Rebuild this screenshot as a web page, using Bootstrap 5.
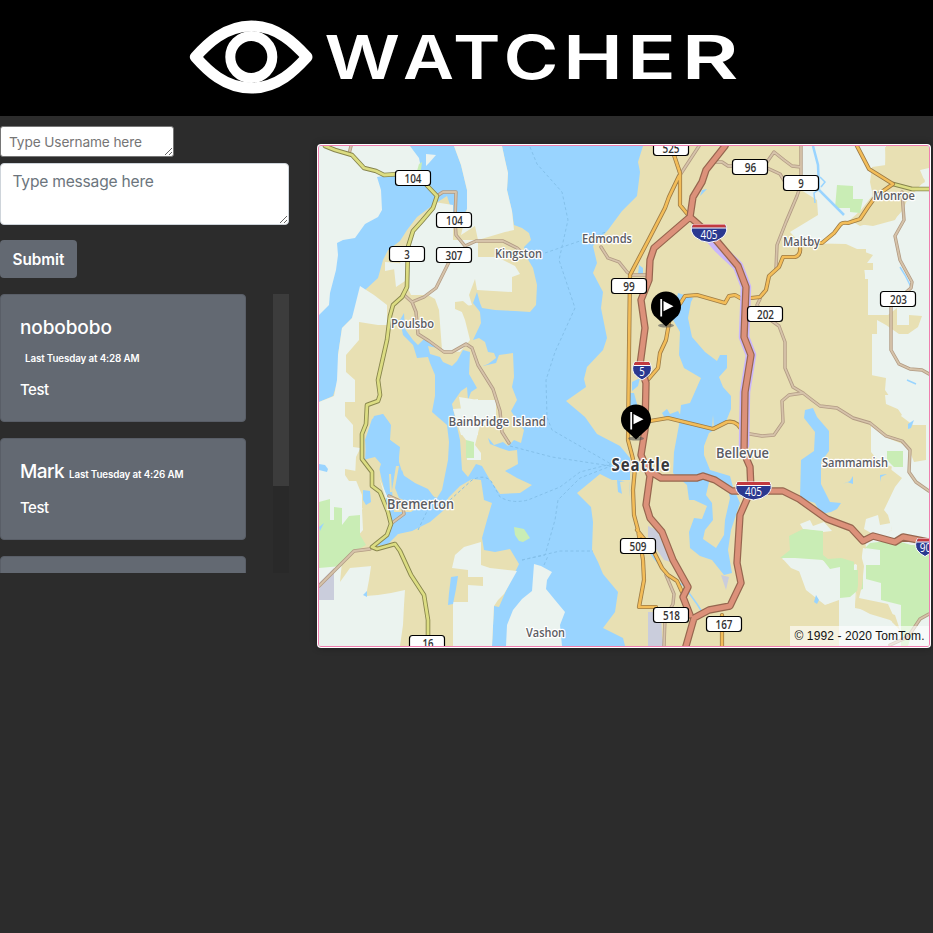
<!DOCTYPE html>
<html lang="en">
<head>
<meta charset="utf-8">
<meta name="viewport" content="width=device-width, initial-scale=1">
<title>Watcher</title>
<link href="https://cdn.jsdelivr.net/npm/bootstrap@5.3.0/dist/css/bootstrap.min.css" rel="stylesheet">
<style>
body{background:#2c2c2c;font-family:"Inter","Liberation Sans",sans-serif;min-height:933px;overflow:hidden}
.site-head{height:116px;background:#000}
.site-head svg{display:block;width:100%;height:116px}
.side{width:289px;padding-top:10px}
.user-box{display:block;width:174px;height:31px;padding:4px 8px;font-size:13.7px;line-height:22px;letter-spacing:-.13px;border:1px solid #767676;border-radius:3px;background:#fff;overflow:hidden;resize:vertical}
.user-box::placeholder{color:#757575}
.msg-box{height:62px;min-height:0;margin-top:6px;padding:6px 11.500px;font-size:15.6px;line-height:24px;letter-spacing:-.22px;border:1px solid #ced4da;border-radius:4px;background:#fff;overflow:hidden;resize:vertical}
.msg-box::placeholder{color:#6c757d}
.send{width:77px;height:38px;margin-top:15px;padding:2px 0 0;background:#636972;border:0;border-radius:4px;color:#fff;font-size:15.3px;font-weight:600}
.feed{height:279px;margin-top:16px;overflow:hidden}
.feed-list{width:246px}
.post{background:#636972;border:1px solid #595e67;border-radius:4px;color:#fff;margin-bottom:16px;padding:20px 19px;height:102px;overflow:hidden}
.post-tall{height:128px}
.who{font-size:19px;font-weight:500;line-height:26px;display:inline-block;letter-spacing:-.1px}
.post:not(.post-tall) .who{letter-spacing:-.6px}
.when{font-size:9.8px;font-weight:600;line-height:14px;margin-left:5px;letter-spacing:-.13px;display:inline-block}
.post-tall .when{display:block;margin-top:11px}
.what{font-size:15px;font-weight:500;line-height:20px;margin-top:14px;letter-spacing:-.5px}
.post:not(.post-tall) .what{margin-top:13px}
.track{width:16px;background:#292929}
.thumb{height:192px;background:#3c3c3c}
.map-frame{width:614px;height:504px;margin:28px 0 0 28px;background:#fff;border-radius:4px;padding:1px;box-shadow:0 0 7px rgba(0,0,0,.3)}
.map-frame svg{display:block;border:1px solid #f07fb0;border-radius:3px;width:612px;height:502px}
.ur{fill:#e8e0b3}.ru{fill:#ebf3ef}.wa{fill:#99d4ff}.gr{fill:#c9edb5}.gy{fill:#cacddc}
.rd{fill:none;stroke-linejoin:round;stroke-linecap:round}
.a1{stroke:#96664f;stroke-width:7.4}.a2{stroke:#dc917a;stroke-width:5}
.b1{stroke:#9c7b45;stroke-width:4.2}.b2{stroke:#f3bd59;stroke-width:2.6}
.c1{stroke:#87854d;stroke-width:4.6}.c2{stroke:#dcdd82;stroke-width:2.8}
.d1{stroke:#b29b84;stroke-width:3.4}.d2{stroke:#d6c3aa;stroke-width:1.8}
.halo{stroke:#c9b6fb;stroke-width:10.5}
.ferry{fill:none;stroke:#84c0ea;stroke-width:1;stroke-dasharray:3 2.5}
.town text{font-family:"Open Sans","Noto Sans",sans-serif;font-size:13px;font-weight:600;fill:#5c5c62;stroke:#fff;stroke-width:2.6px;stroke-linejoin:round;paint-order:stroke}
.town .mid{font-size:14.5px}
.town .big{font-size:17px;font-weight:700;fill:#38383c;letter-spacing:1px}
.sign rect{fill:#fff;stroke:#000;stroke-width:1.2}
.sign text,.inter text{font-family:"Open Sans","Noto Sans",sans-serif;font-size:12px;font-weight:600;fill:#333}
.inter text{fill:#fff;font-weight:400}
.logo-text text{font-family:"Inter","Liberation Sans",sans-serif;font-weight:600;font-size:60px;fill:#fff}
</style>
</head>
<body>
<header class="site-head">
<svg viewBox="0 0 933 116" role="img" aria-label="Watcher">
<g fill="none" stroke="#fff">
<path d="M195.500 57C207 44 225 26 251.300 26S295 44 307 57C295 70 278 88 251.300 88S207 70 195.500 57Z" stroke-width="11" stroke-linejoin="round"/>
<circle cx="251.300" cy="57" r="21" stroke-width="10"/>
</g>
<g class="logo-text">
<text x="324.500" y="78.600" textLength="75.500" lengthAdjust="spacingAndGlyphs">W</text>
<text x="403" y="78.600" textLength="51" lengthAdjust="spacingAndGlyphs">A</text>
<text x="453" y="78.600" textLength="47.500" lengthAdjust="spacingAndGlyphs">T</text>
<text x="503.500" y="78.600" textLength="55" lengthAdjust="spacingAndGlyphs">C</text>
<text x="563" y="78.600" textLength="60" lengthAdjust="spacingAndGlyphs">H</text>
<text x="627" y="78.600" textLength="49" lengthAdjust="spacingAndGlyphs">E</text>
<text x="681.500" y="78.600" textLength="57" lengthAdjust="spacingAndGlyphs">R</text>
</g>
</svg>
</header>
<main class="d-flex align-items-start">
<section class="side flex-shrink-0">
<textarea class="user-box" rows="1" placeholder="Type Username here"></textarea>
<textarea class="form-control msg-box" placeholder="Type message here"></textarea>
<button class="btn send d-block" type="button">Submit</button>
<div class="feed d-flex justify-content-between">
<div class="feed-list">
<article class="post post-tall"><div class="who">nobobobo</div><div class="when">Last Tuesday at 4:28 AM</div><div class="what">Test</div></article>
<article class="post"><div class="who">Mark</div><div class="when">Last Tuesday at 4:26 AM</div><div class="what">Test</div></article>
<article class="post"></article>
</div>
<div class="track"><div class="thumb"></div></div>
</div>
</section>
<section class="map-frame flex-shrink-0">
<svg viewBox="319 146 610 500">
<defs>
<path id="minor" d="M351 146L349 154M437 196L443 192H456L455 220L456 235L465 246L476 241H503L517 248L526 256M449 262L436 288L424 297L412 302L403 294L401 298M412 302L416 312L418 334L429 341L444 352L452 352L466 344L472 348L478 365L493 389L500 411L502 432L509 443M319 586L354 551L370 549M392 523L404 514L402 502L389 496M699 146L680 175M601 247L608 258L619 262L627 272L631 275H649M714 162H722L728 166H733M767 162L774 152L784 160L792 166L801 167M767 168L780 174L785 182M801 146V184L797 196L786 222L777 245L776 269M760 299L757 305L765 316L779 326L785 342V368L793 387L803 393L812 400L820 406L837 408L853 418L870 423L886 436L902 441L910 450L909 472L916 482L929 491M803 393L789 395L782 401L783 422L774 435L762 436L744 433M902 192L904 220L895 236L900 260L912 282L911 288L904 294M891 306V350L899 364L910 369L922 370L929 374M929 614L920 619L908 637L890 645M666 575L674 594L673 604L665 618L664 646"/>
<g id="wide"><path d="M-16.500-8.500Q-20-2-14 4Q-8 9 0 9.500Q8 9 14 4Q20-2 16.500-8.500Z" fill="#2b3990" stroke="#fff"/><path d="M-16-8.500H16L17-5.200H-17Z" fill="#c23a3f"/><path d="M-17-5H17" stroke="#fff"/></g>
<g id="slim"><path d="M-7.500-8.500Q-11-2-8 3Q-5 7 0 9.500Q5 7 8 3Q11-2 7.500-8.500Z" fill="#2b3990" stroke="#fff"/><path d="M-7-8.500H7L8.300-5.200H-8.300Z" fill="#c23a3f"/><path d="M-8.500-5H8.500" stroke="#fff"/></g>
<g id="pin"><ellipse cx="0" cy="18" rx="8" ry="2" fill="#555" opacity=".6"/><path d="M0 19L-12 8A15 15 0 1 1 12 8Z"/><path d="M-4.800-8.500V9" stroke="#fff" stroke-width="1.800"/><path d="M-2.500-6.500L7.500-1.200L-2.500 3.800Z" fill="#fff"/></g>
</defs>
<rect class="wa" x="319" y="146" width="610" height="500"/>
<!-- Olympic shore -->
<path class="ru" d="M319 146H410L419 158L421 168L418 172L395 174L377 177L381 190L382 210L378 217L365 224L355 238L343 240L337 243L338 255L336 270L330 293L329 305L319 315Z"/>
<path class="ru" d="M426 154L436 155L429 163L426 166Z"/>
<path class="gr" d="M419 164l3-2l-1 8l-4 1z"/>
<!-- Kitsap peninsula -->
<path class="ur" d="M454 146H502L505 160L508 173L507 190L512 211L514 225L522 228L529 233L531 240L524 247L526 256L533 268L537 285L536 305L530 312L515 311L495 310L482 308L480 303L477 292L473 303L480 312L481 323L473 340L479 338L485 342L488 352L494 353L496 358L488 364L483 366L496 363L499 355L513 353L514 377L512 387L517 400L511 411L518 422L524 430L521 443L514 440L508 446L503 442L494 445L490 440L488 438L490 444L500 448L509 451L517 450L518 464L505 471L517 478L532 485L520 493L500 494L490 480L482 466L476 464L468 477L462 470L460 440L452 404L461 391L467 387L468 400L471 392L477 388L469 374L470 352L463 350L457 361L452 366L443 362L440 357L430 354L428 346L437 348L425 338L418 345L413 340L405 329L404 313L400 320L403 335L413 345L417 358L428 357L430 363L435 375L435 396L432 412L447 425L449 442L448 460L442 490L437 498L430 495L423 488L405 479L402 470L398 477L404 490L396 487L400 447L390 440L390 424L383 414L372 419L365 440L367 460L380 465L382 477L386 500L392 530L375 545L390 541L396 534L413 530L428 522L437 515L449 497L460 486L472 479L481 480L484 500L492 503L487 520L482 538L484 550L495 552L510 549L519 564L505 593L499 607L494 606L492 646H319V402L333 396L338 380L338 355L342 328L352 318L357 305L365 290L378 278L383 260L388 250L400 241L407 230L417 217L433 205L447 196L453 214L457 228L461 220L467 209L467 190L461 165Z"/>
<path class="ru" d="M454 146H502L505 160L508 173L507 190L512 211L514 230L505 232L478 240L475 226L461 235L467 209L467 190L461 165ZM434 202L453 205V240L478 240V257H497L515 266L520 274L512 277V292L477 290L475 279L469 295L472 305L460 307L465 320L470 340L460 352L442 350L439 310L435 299L428 295H411L405 281L396 287L394 268L410 254V235L422 222ZM385 262L399 263L400 268L385 271ZM360 286L374 295L387 305V325L378 325L359 322V340L346 355V372L355 380L355 402L345 402V416L353 425V447L360 448V478L378 475L388 498L365 500L362 510L363 530L350 545H362L372 560L369 580L366 596L378 595L391 593L405 590L404 605L403 625L400 646H319V402L334 396L337 380L338 355L342 328L352 318Z"/>
<path class="ru" d="M459 397L478 400H496V425L480 425L475 445L481 453V460H467L466 440L460 432L462 415ZM453 409L466 408L462 401L478 399V435H461ZM464 547L481 542V565L490 568L517 571L504 594L498 600L494 606L492 646H453V602H468V585L483 586V577H468V570L452 568L455 555Z"/>
<path class="ur" d="M345 469L356 471L357 481L349 481L345 475ZM356 457L360 449L370 460L364 475L378 467L380 480L386 500L375 514L362 508L362 495L355 478ZM400 380L408 390L407 410L400 402ZM455 302l8-1l7 6l-8 5l-7-3zM355 548L390 540L372 566L350 568L340 582L342 562Z"/>
<path class="gr" d="M319 502L330 499V520H334V507L342 508V525L349 516L360 515V535L366 545L352 553L345 559L342 566L319 568ZM466 440L474 442V458H466Z"/>
<path class="gy" d="M319 583L334 568V600H319Z"/>
<path class="wa" d="M319 464l6 1l3 4l-1 3l-8-2zM363 490l7 1l1 11l-5 3l-3-5zM451 577l7-1l-2 13l-3 15l-5 1l1-12zM363 595l4-4l0 6zM319 527l5-4l-4 8z"/>
<path class="wa" d="M374 416L383 414L391 425L390 440L399 448V462L403 475L415 483L428 489L437 501L448 497L444 510L430 522L412 531L398 534L388 544L377 546L394 526L396 510L386 493L382 481L378 463L365 462L366 440Z"/>
<path class="ur" d="M389 474l2 0l1 18l-2 0zM396 466l3 0l-4 22l4 10l7 3l15 4l-10 7l-17 0l-2-22zM363 460l12-3l6 7l-2 6l-13-2z"/>
<path class="gr" d="M514 527l10 2l6 9l-7 4l-4-1l-4-6z"/>
<!-- Vashon -->
<path class="ru" d="M534 564L541 566L552 572L547 580L546 589L555 600L565 612L560 625L562 646H506L507 625L513 610L522 599L532 591Z"/>
<!-- eastern mainland -->
<path class="ur" d="M643 146H929V646H625L623 638L603 628L615 612L618 592L603 574L598 562L592 550L593 522L591 507L577 493L600 474L612 480L630 480V458L620 446L597 434L585 417L566 401L586 387L584 379L587 367L603 350L607 338L601 308L603 292L593 273L597 263L593 246L608 230L622 211L637 196L640 172L638 162Z"/>
<!-- rural land to the east -->
<path class="ru" d="M801 146H886L885 166L872 170V196L861 210L850 220L860 226L873 222L894 220L903 210L911 190L925 182L920 170L929 168V646H860L839 646V600L825 605L806 590L798 568L795 560H782L803 551L823 560L840 561L847 570L866 556L865 505L870 485L890 480L892 465L885 455L895 445L900 438H872L871 427H887L902 415L885 390L886 378L871 375L871 321L865 317V275L864 267L873 255L857 249L846 244L800 243L790 232L818 215L817 200L801 190Z"/>
<path class="ur" d="M725 260H857V249H866V263H873V270H863V279H868V319H872V385H885V395L889 407L905 419L913 425H926V460L914 462L908 447L885 437L871 430V450L880 461L902 478L895 487L884 510L888 515L892 530L879 538L874 532L863 540L856 550L865 567L858 602L895 615L900 630L890 620L875 612L855 608L857 565L840 554L822 562L804 550L790 540L725 530Z"/>
<path class="ur" d="M866 315H888L897 308V325H909V315L922 316L918 327L908 334L899 334L886 325L877 320V334H865ZM885 147L903 151V166H918L928 152L929 167L915 171L925 180L912 195L903 205L895 220L873 226L858 224L874 201L870 182L872 167L886 165Z"/>
<path class="ru" d="M800 524L810 520L813 526L824 522L832 531L823 532L803 529ZM871 426L885 437L905 445L911 463V480L902 476L900 469L880 463L871 452ZM885 395H929V420L910 421L900 410L886 404ZM782 558L798 556L808 563L813 555L824 561L829 568L839 569V598L827 604L819 586H808L803 573L791 568ZM863 548L880 552V563H866V579H881V604H892V626L871 606L856 600L860 570ZM841 613L851 608L858 614L878 616L896 632V646H841ZM866 519L878 515L880 525L891 523L892 530L880 538L871 533L864 529Z"/>
<path class="gr" d="M789 536L803 529L823 531V555L828 559L854 557L854 570H863V589L857 591L850 597L840 598V567L830 569L823 560L795 558L780 558L790 550ZM870 543L895 540L911 545H929V612L918 624L912 633L908 646H901V605L881 600V583L866 579L866 565L880 565V550L865 548ZM837 185L853 186V199H863L860 213L850 212V208H835ZM887 451H903V467H894L887 460Z"/>
<path class="ur" d="M837 544L857 540L864 566L862 586L859 598L888 604L898 626L890 620L870 614L855 606L858 585V563L838 557Z"/>
<!-- lakes -->
<path class="wa" d="M678 293L693 298L691 302L688 318L692 337L705 352L717 361L720 355L727 355V368L719 377L723 387L731 396V409L725 424L709 433L704 446V455L710 470L730 476L733 487L740 503L731 530L728 550L732 573L724 575L712 560L700 556L690 548L689 532L694 518L702 519L707 506L694 500L689 500L687 485L673 473L674 452L679 425L681 405L690 403L701 378L684 368L679 355L680 332L672 318Z"/>
<path class="ur" d="M713 415l1 14l-2 0zM710 478L727 485L730 498L725 520L724 535L716 548L703 539L705 530L713 520L712 503L706 495Z"/>
<path class="wa" d="M662 413l5-4l3 5l8-3l4 7l-16 2z"/>
<path class="wa" d="M805 410L813 408L817 417L829 431V451L821 462V484L830 502L841 503L837 509L831 512L821 514L815 503L800 498L801 460L814 451L815 432L804 418Z"/>
<path class="wa" d="M639 265l4 3l0 6l-5 0zM707 189l-7 7l2-6zM632 382l8-4l-2 8l-6 5zM630 393l4 0l8 29l-7 11l-8-13zM843 484l7-3l3-5l0 8l-6-2zM880 482l0-7l7-1l-6 3zM908 424l6-4l-3 8l-3 1zM814 602l2-7l3 5l-2 4zM617 480l13 2l-1 15l-11-5z"/>
<path class="ur" d="M620 482l10-2l-1 20l-6 0z"/>
<path class="gy" d="M648 526L657 530L671 562L664 560L648 537ZM648 612L661 612L662 636L664 646H648ZM721 575L729 577L726 590Z"/>
<g fill="none" stroke="#99d4ff"><path stroke-width="2.500" d="M813 146L818 165L819 190L844 215"/><path stroke-width="1.500" d="M634 490L635 524L645 545L654 558L668 575L684 586L697 604L702 612M820 177l5 5l-4 5M818 190l-4 3l1 10M900 267l5 8l6 12M907 380l9 4"/></g>
<path class="ferry" d="M530 147L537 164L562 192L568 220L559 260L575 308L555 352L546 380L547 417L552 430L611 464M545 253L606 232M510 446L552 457L611 466M450 500L472 480Q484 474 491 481L500 497Q512 504 528 500L560 487L580 472L611 464M418 530L430 505M522 560L545 555L555 520L558 500L580 478L611 466M522 560L560 551H593M544 565L548 556"/>
<!-- minor roads -->
<use href="#minor" class="rd d1"/>
<use href="#minor" class="rd d2"/>
<!-- highways -->
<g class="rd">
<path class="c1" d="M325 146L335 150L352 155L364 168L376 171L384 175L400 174L418 176L437 196L433 208L422 221L413 231L408 247L407 287L402 297L393 305L390 316L387 340L378 380L380 395L378 401L367 405L366 424L362 434V459L372 472L372 486L380 492L388 512L391 524L387 535L372 547L377 549L395 544L400 551L411 575L424 595L428 620V646M893 184L912 189H929"/>
<path class="c2" d="M325 146L335 150L352 155L364 168L376 171L384 175L400 174L418 176L437 196L433 208L422 221L413 231L408 247L407 287L402 297L393 305L390 316L387 340L378 380L380 395L378 401L367 405L366 424L362 434V459L372 472L372 486L380 492L388 512L391 524L387 535L372 547L377 549L395 544L400 551L411 575L424 595L428 620V646M893 184L912 189H929"/>
<path class="b1" d="M674 155L680 173L680 205L689 216M679 176L669 197L665 208L649 239L630 275L629 350L628 440L632 455L635 468L633 490L634 515L638 530L643 560L644 580L639 607H656M637 530L653 550L662 568L668 575L677 581L682 592M680 304L685 296L697 295L725 303L729 296L735 295L742 299L760 297L766 290L769 276L779 267L783 257L795 257Q801 255 800 248M812 243L822 243L834 233L840 225Q842 222 848 223L860 219L868 207L876 196L893 184L869 169L857 146M669 323L666 340L660 353L658 368L646 382M650 421L668 418L713 429L727 422Q738 420 743 433M722 615L722 646"/>
<path class="b2" d="M674 155L680 173L680 205L689 216M679 176L669 197L665 208L649 239L630 275L629 350L628 440L632 455L635 468L633 490L634 515L638 530L643 560L644 580L639 607H656M637 530L653 550L662 568L668 575L677 581L682 592M680 304L685 296L697 295L725 303L729 296L735 295L742 299L760 297L766 290L769 276L779 267L783 257L795 257Q801 255 800 248M812 243L822 243L834 233L840 225Q842 222 848 223L860 219L868 207L876 196L893 184L869 169L857 146M669 323L666 340L660 353L658 368L646 382M650 421L668 418L713 429L727 422Q738 420 743 433M722 615L722 646"/>
<path class="halo" d="M712 240L719 248L738 266L746 287L744 337L751 355L745 392L744 445"/>
<path class="a1" d="M725 146L706 170L702 182L693 197L690 217L716 240L738 266L746 287L744 337L751 355L745 392L744 453L750 467L751 490L740 515L737 563L741 583L730 606L709 610L694 618L686 646M690 217L654 248L650 260L649 280L641 300L645 328L640 365L646 383L645 430L641 455L650 476L646 505L650 518L662 532L673 560L688 587L683 597L690 615M648 470L661 478H697L703 476L715 480L732 491H783L799 499L827 519L851 528L863 541L873 536L895 542L903 537L929 542"/>
<path class="a2" d="M725 146L706 170L702 182L693 197L690 217L716 240L738 266L746 287L744 337L751 355L745 392L744 453L750 467L751 490L740 515L737 563L741 583L730 606L709 610L694 618L686 646M690 217L654 248L650 260L649 280L641 300L645 328L640 365L646 383L645 430L641 455L650 476L646 505L650 518L662 532L673 560L688 587L683 597L690 615M648 470L661 478H697L703 476L715 480L732 491H783L799 499L827 519L851 528L863 541L873 536L895 542L903 537L929 542"/>
</g>
<!-- route signs -->
<g class="sign" text-anchor="middle">
<rect x="395.500" y="170.500" width="35" height="15" rx="3"/><text x="413" y="182.500" textLength="17" lengthAdjust="spacingAndGlyphs">104</text>
<rect x="436.500" y="212.500" width="35" height="15" rx="3"/><text x="454.500" y="225" textLength="17" lengthAdjust="spacingAndGlyphs">104</text>
<rect x="389.500" y="246.500" width="35" height="15" rx="3"/><text x="407" y="258.500" textLength="5.500" lengthAdjust="spacingAndGlyphs">3</text>
<rect x="436.500" y="247.500" width="35" height="15" rx="3"/><text x="454" y="259.500" textLength="17" lengthAdjust="spacingAndGlyphs">307</text>
<rect x="653.500" y="140.500" width="35" height="15" rx="3"/><text x="671" y="152.500" textLength="17" lengthAdjust="spacingAndGlyphs">525</text>
<rect x="732.500" y="159.500" width="35" height="15" rx="3"/><text x="750.500" y="171.500" textLength="11.500" lengthAdjust="spacingAndGlyphs">96</text>
<rect x="783.500" y="175.500" width="35" height="15" rx="3"/><text x="801" y="187.500" textLength="5.500" lengthAdjust="spacingAndGlyphs">9</text>
<rect x="611.500" y="278.500" width="35" height="15" rx="3"/><text x="629" y="290.500" textLength="11.500" lengthAdjust="spacingAndGlyphs">99</text>
<rect x="747.500" y="306.500" width="35" height="15" rx="3"/><text x="765.500" y="318.800" textLength="17" lengthAdjust="spacingAndGlyphs">202</text>
<rect x="880.500" y="291.500" width="35" height="15" rx="3"/><text x="898.500" y="303.500" textLength="17" lengthAdjust="spacingAndGlyphs">203</text>
<rect x="620.500" y="538.500" width="35" height="15" rx="3"/><text x="638" y="550.800" textLength="17" lengthAdjust="spacingAndGlyphs">509</text>
<rect x="653.500" y="607.500" width="35" height="15" rx="3"/><text x="671.500" y="619.500" textLength="17" lengthAdjust="spacingAndGlyphs">518</text>
<rect x="706.500" y="616.500" width="35" height="15" rx="3"/><text x="724" y="629" textLength="17" lengthAdjust="spacingAndGlyphs">167</text>
<rect x="409.500" y="635.500" width="35" height="15" rx="3"/><text x="428" y="647.500" textLength="11" lengthAdjust="spacingAndGlyphs">16</text>
</g>
<g class="inter" text-anchor="middle">
<use href="#wide" x="709" y="233"/><text x="709" y="238.500" textLength="17" lengthAdjust="spacingAndGlyphs">405</text>
<use href="#wide" x="753.500" y="490.500"/><text x="753.500" y="496" textLength="17" lengthAdjust="spacingAndGlyphs">405</text>
<use href="#slim" x="642" y="370.500"/><text x="642" y="375.800" textLength="5.500" lengthAdjust="spacingAndGlyphs">5</text>
<use href="#slim" x="925" y="547"/><text x="925.500" y="552.300" textLength="11.500" lengthAdjust="spacingAndGlyphs">90</text>
</g>
<g class="town">
<text x="495" y="257.800" textLength="47" lengthAdjust="spacingAndGlyphs">Kingston</text>
<text x="582" y="243.300" textLength="50" lengthAdjust="spacingAndGlyphs">Edmonds</text>
<text x="391" y="328.300" textLength="43" lengthAdjust="spacingAndGlyphs">Poulsbo</text>
<text x="448.500" y="426" textLength="97.500" lengthAdjust="spacingAndGlyphs">Bainbridge Island</text>
<text class="mid" x="387" y="508.500" textLength="67" lengthAdjust="spacingAndGlyphs">Bremerton</text>
<text x="526" y="637" textLength="39" lengthAdjust="spacingAndGlyphs">Vashon</text>
<text x="873" y="199.500" textLength="42" lengthAdjust="spacingAndGlyphs">Monroe</text>
<text x="783" y="246" textLength="37" lengthAdjust="spacingAndGlyphs">Maltby</text>
<text class="mid" x="716" y="458.300" textLength="53" lengthAdjust="spacingAndGlyphs">Bellevue</text>
<text x="822" y="466.500" textLength="66" lengthAdjust="spacingAndGlyphs">Sammamish</text>
<text class="big" x="611.500" y="470.800" textLength="59" lengthAdjust="spacingAndGlyphs">Seattle</text>
</g>
<use href="#pin" x="666" y="307.500"/>
<use href="#pin" x="636" y="420.500"/>
<rect x="790" y="626" width="139" height="20" fill="#fff" opacity=".6"/>
<text x="794.500" y="640" font-family="Liberation Sans, Arial, sans-serif" font-size="12" fill="#111" textLength="130">© 1992 - 2020 TomTom.</text>
</svg>
</section>
</main>
<script src="https://cdn.jsdelivr.net/npm/bootstrap@5.3.0/dist/js/bootstrap.bundle.min.js"></script>
</body>
</html>
